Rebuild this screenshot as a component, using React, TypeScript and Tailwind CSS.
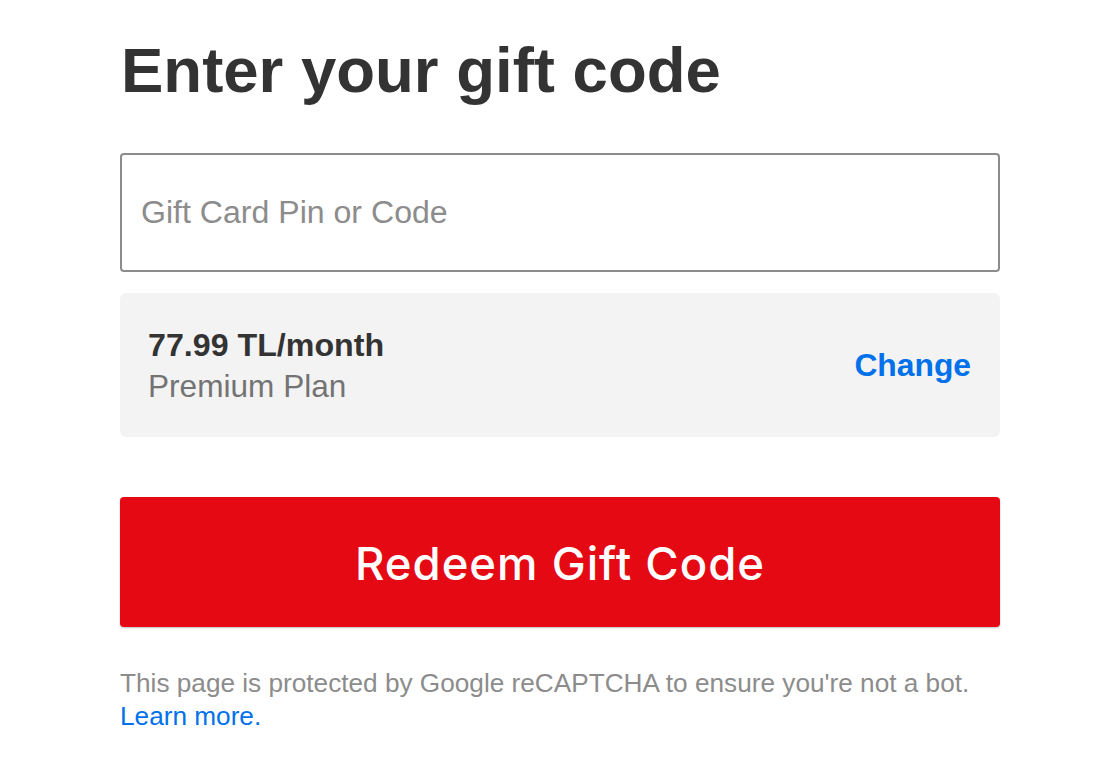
const App = () => {
  return (
    <div className="min-h-[780px] bg-white font-['Liberation_Sans',Arial,sans-serif]">
      <div className="w-[880px] ml-[120px] pt-[28px]">
        <h1 className="text-[63.5px] leading-[84px] font-bold text-[#333333] ml-[1px]">
          Enter your gift code
        </h1>

        <div className="mt-[41px] h-[119px] rounded-[4px] border-2 border-[#8c8c8c] flex items-center px-[19px]">
          <input
            className="w-full bg-transparent outline-none text-[32.1px] text-[#333] placeholder:text-[#8c8c8c]"
            placeholder="Gift Card Pin or Code"
          />
        </div>

        <div className="mt-[21px] h-[144px] rounded-[6px] bg-[#f3f3f3] flex items-center justify-between pl-[28px] pr-[29px]">
          <div className="flex flex-col pt-[2px]">
            <span className="text-[32.2px] leading-[41px] font-bold text-[#333333]">77.99 TL/month</span>
            <span className="text-[31.6px] leading-[41px] text-[#737373]">Premium Plan</span>
          </div>
          <a className="text-[31.8px] font-bold text-[#0071eb] cursor-pointer pt-[2px]">Change</a>
        </div>

        <button className="mt-[60px] w-full h-[130px] rounded-[4px] bg-[#e50914] text-white font-['Inter',sans-serif] font-medium text-[45.5px] tracking-[1px] pt-[4px] shadow-[0_1px_2px_rgba(0,0,0,0.25)]">
          Redeem Gift Code
        </button>

        <p className="mt-[40px] text-[26.2px] leading-[33px] text-[#8c8c8c]">
          This page is protected by Google reCAPTCHA to ensure you're not a bot.
          <br />
          <a className="text-[#0071eb] cursor-pointer">Learn more.</a>
        </p>
      </div>
    </div>
  );
};

export default App;
